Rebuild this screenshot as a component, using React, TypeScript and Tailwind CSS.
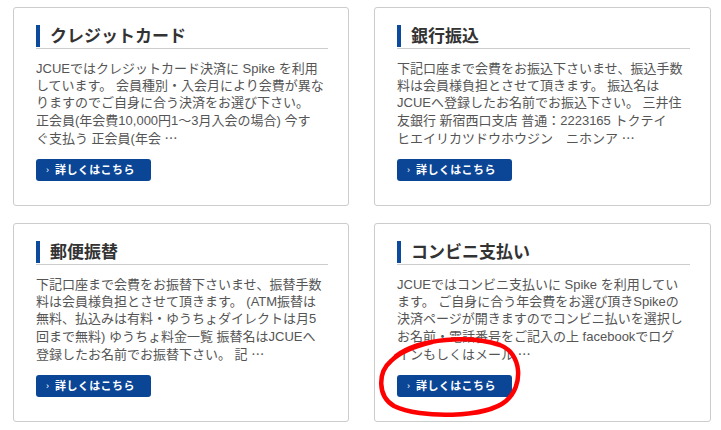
import { FC } from 'react';

interface PaymentCardProps {
    title: string;
    lines: string[];
}

// the trailing "…" is drawn mid-height in the original (CJK glyph)
const renderLine = (line: string) => {
    if (!line.endsWith('…')) return line;
    return (
        <>
            {line.slice(0, -1)}
            <span style={{ fontFamily: '"Noto Sans CJK JP", sans-serif' }}>…</span>
        </>
    );
};

const PaymentCard: FC<PaymentCardProps> = ({ title, lines }) => {
    return (
        <div className="h-[199px] border border-[#cccccc] rounded-[3px] bg-white pl-[22px] pr-[20px] pt-[17px]">
            <div className="border-b border-[#cccccc] pb-[1px]">
                <div className="flex h-[22px] items-center border-l-4 border-[#0b4a9c] pl-[10px]">
                    <h2 className="text-[17px] font-bold leading-none text-[#333333]">{title}</h2>
                </div>
            </div>
            <p className="mt-[11px] text-[13px] leading-[17.2px] text-[#555555]">
                {lines.map((line, i) => (
                    <span key={i} className="block whitespace-nowrap">{renderLine(line)}</span>
                ))}
            </p>
            <a
                href="#"
                className="mt-[12px] flex h-[22px] w-[115px] items-center rounded-[3px] bg-[#0b4595] pl-[10px] text-white"
            >
                <span className="text-[9px] leading-none">›</span>
                <span className="ml-[6px] text-[11px] font-bold leading-none tracking-[0.4px]">詳しくはこちら</span>
            </a>
        </div>
    );
};

const cards: PaymentCardProps[] = [
    {
        title: 'クレジットカード',
        lines: [
            'JCUEではクレジットカード決済に Spike を利用',
            'しています。 会員種別・入会月により会費が異な',
            'りますのでご自身に合う決済をお選び下さい。',
            '正会員(年会費10,000円1〜3月入会の場合) 今す',
            'ぐ支払う 正会員(年会 …',
        ],
    },
    {
        title: '銀行振込',
        lines: [
            '下記口座まで会費をお振込下さいませ、振込手数',
            '料は会員様負担とさせて頂きます。 振込名は',
            'JCUEへ登録したお名前でお振込下さい。 三井住',
            '友銀行 新宿西口支店 普通：2223165 トクテイ',
            'ヒエイリカツドウホウジン　ニホンア …',
        ],
    },
    {
        title: '郵便振替',
        lines: [
            '下記口座まで会費をお振替下さいませ、振替手数',
            '料は会員様負担とさせて頂きます。 (ATM振替は',
            '無料、払込みは有料・ゆうちょダイレクトは月5',
            '回まで無料) ゆうちょ料金一覧 振替名はJCUEへ',
            '登録したお名前でお振替下さい。 記 …',
        ],
    },
    {
        title: 'コンビニ支払い',
        lines: [
            'JCUEではコンビニ支払いに Spike を利用してい',
            'ます。 ご自身に合う年会費をお選び頂きSpikeの',
            '決済ページが開きますのでコンビニ払いを選択し',
            'お名前・電話番号をご記入の上 facebookでログ',
            'インもしくはメール …',
        ],
    },
];

export default function App() {
    return (
        <div
            className="relative h-[430px] w-[721px] overflow-hidden bg-white pl-[13px] pt-[7px]"
            style={{ fontFamily: '"Liberation Sans", "Noto Sans CJK JP", sans-serif' }}
        >
            <div className="grid grid-cols-[336px_337px] gap-x-[25px] gap-y-[17px]">
                {cards.map((card) => (
                    <PaymentCard key={card.title} {...card} />
                ))}
            </div>

            {/* hand-drawn red annotation around the last button */}
            <svg className="pointer-events-none absolute left-0 top-0" width="721" height="430">
                <path
                    d="M396 356 C420 338, 470 335, 500 345 C522 353, 524 386, 506 401 C486 418, 420 419, 394 406 C377 396, 378 372, 391 361 C400 352, 415 346, 432 342"
                    fill="none"
                    stroke="#ff0000"
                    strokeWidth="4.5"
                    strokeLinecap="round"
                    strokeLinejoin="round"
                />
            </svg>
        </div>
    );
}
